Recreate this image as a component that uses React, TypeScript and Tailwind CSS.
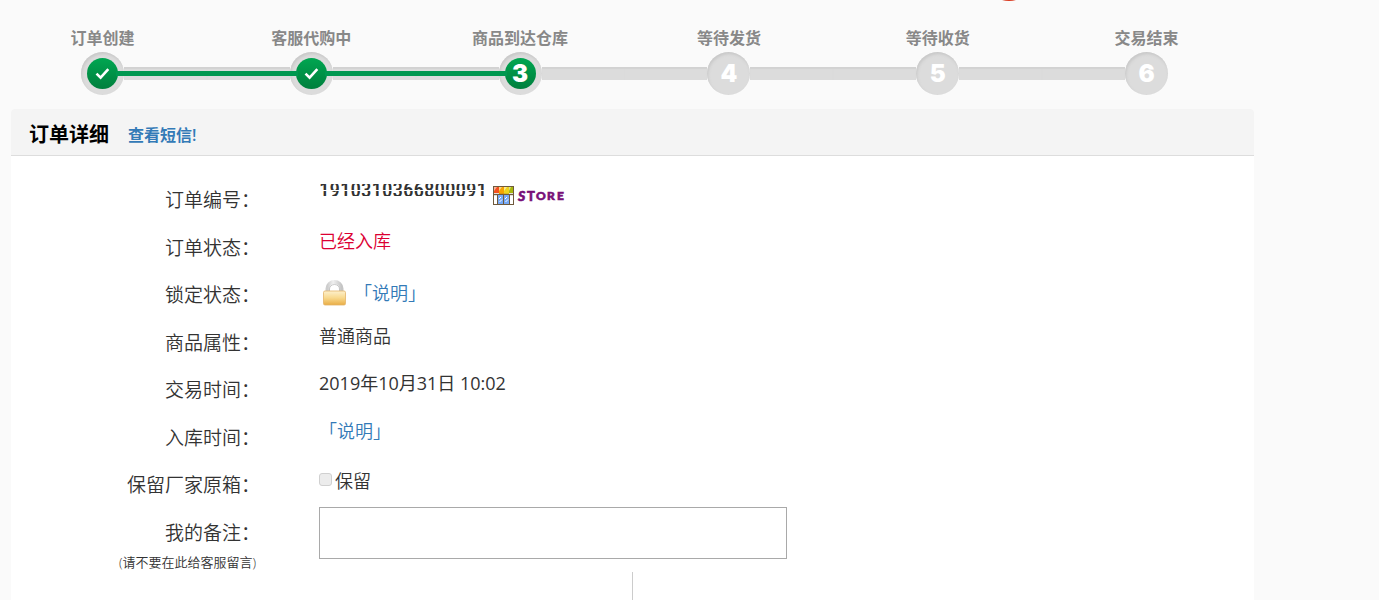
import * as React from "react"
import clsx from "clsx"

type StepState = "done" | "current" | "todo"

interface Step {
    label: string
    state: StepState
}

const steps: Step[] = [
    { label: "订单创建", state: "done" },
    { label: "客服代购中", state: "done" },
    { label: "商品到达仓库", state: "current" },
    { label: "等待发货", state: "todo" },
    { label: "等待收货", state: "todo" },
    { label: "交易结束", state: "todo" },
]

function Connector({ hidden, active }: { hidden: boolean; active: boolean }) {
    return (
        <div className={clsx("relative z-10 flex h-[13px] flex-1 items-center", !hidden && "bg-[#dcdcdc] shadow-[inset_0_2px_1px_#d2d2d2]")}>
            {!hidden && active && <div className="-mx-2 h-[5px] flex-1 bg-[#009850]" />}
        </div>
    )
}

function ProgressSteps() {
    return (
        <ol className="-ml-0.5 mr-32 grid grid-cols-6 pt-[26px]">
            {steps.map((step, i) => (
                <li key={step.label} className="text-center">
                    <div className="h-[26px] text-base leading-6 font-bold text-[#888]">{step.label}</div>
                    <div className="flex items-center">
                        <Connector hidden={i === 0} active={step.state !== "todo"} />
                        <div className="flex size-[43px] items-center justify-center rounded-full bg-[#dcdcdc] shadow-[inset_1px_2px_3px_#c8c8c8]">
                            <div className={clsx(
                                "flex size-[31px] items-center justify-center rounded-full font-['Inter'] text-2xl leading-none font-black text-white",
                                step.state !== "todo" && "bg-linear-to-b from-[#00a651] to-[#007f3d]"
                            )}>
                                {step.state === "done" ? (
                                    <svg className="size-[15px]" viewBox="0 0 15 15" fill="none" stroke="#fff" strokeWidth="2.6" aria-hidden="true">
                                        <path d="M1.5 7.6 5.6 11.6 13.3 3.2" />
                                    </svg>
                                ) : i + 1}
                            </div>
                        </div>
                        <Connector hidden={i === steps.length - 1} active={step.state === "done"} />
                    </div>
                </li>
            ))}
        </ol>
    )
}

function StoreLogo() {
    return (
        <svg className="h-5 w-[75px]" viewBox="0 0 75 20" aria-label="Store">
            <rect x="0.5" y="0.5" width="20" height="18" fill="#fff" stroke="#6f5a3c" />
            <rect x="1" y="1" width="5" height="6" fill="#f4511e" />
            <rect x="6" y="1" width="5" height="7" fill="#f5a300" />
            <rect x="11" y="1" width="5" height="7" fill="#eed31c" />
            <rect x="16" y="1" width="4" height="6" fill="#a9b80c" />
            <path d="M1 1h3l-3 4zM6 1h3l-3 4zM11 1h3l-3 4zM16 1h2l-2 4z" fill="#fff" opacity=".55" />
            <path d="M0 8.5h21" stroke="#6f5a3c" strokeWidth="1.4" />
            <rect x="5" y="9" width="5" height="9" fill="#76a9f7" />
            <rect x="11" y="9" width="5" height="9" fill="#76a9f7" />
            <path d="M4.5 9v10M10.5 9v10M16.5 9v10" stroke="#6f5a3c" />
            <path d="m6 13 2-2M6.500 16l2.500-2.500M12 13l2-2M12.500 16l2.500-2.500" stroke="#fff" />
            <g fill="#780f78" stroke="#780f78" strokeWidth=".6" fontFamily="Lato, sans-serif" fontWeight="900">
                <text x="25" y="15" fontSize="14" fontStyle="italic">S</text>
                <text x="34" y="15" fontSize="13">T</text>
                <text x="43" y="14" fontSize="12">O</text>
                <text x="54" y="14" fontSize="12">R</text>
                <text x="64" y="14" fontSize="12">E</text>
            </g>
        </svg>
    )
}

function LockIcon() {
    return (
        <svg className="h-[27px] w-[25px]" viewBox="0 0 25 27" aria-hidden="true">
            <defs>
                <linearGradient id="lock-body" x1="0" y1="0" x2="0" y2="1">
                    <stop offset="0" stopColor="#fdf0cd" />
                    <stop offset=".5" stopColor="#f8d88c" />
                    <stop offset="1" stopColor="#e9ad45" />
                </linearGradient>
                <linearGradient id="lock-shackle" x1="0" y1="0" x2="1" y2="0">
                    <stop offset="0" stopColor="#cdcdcd" />
                    <stop offset=".4" stopColor="#f0f0f0" />
                    <stop offset="1" stopColor="#c5c5c5" />
                </linearGradient>
            </defs>
            <path d="M5.500 12V8.500a7 6.500 0 0 1 14 0V12" fill="none" stroke="url(#lock-shackle)" strokeWidth="4" />
            <path d="M7.500 12V9a5 4.500 0 0 1 10 0V12" fill="none" stroke="#b5b5b5" strokeWidth=".7" />
            <rect x="1.500" y="11" width="22" height="14" rx="1.500" fill="url(#lock-body)" stroke="#e3b468" strokeWidth=".8" />
        </svg>
    )
}

// Only the upright strokes of the digits stay visible
function MaskedNumber() {
    return (
        <span className="relative mr-1.5 inline-block font-['Liberation_Sans_Narrow','Roboto_Condensed','Open_Sans'] text-[21px] leading-6 font-medium">
            1910310366800091
            <span className="absolute inset-0 flex flex-col justify-between py-1" aria-hidden="true">
                <span className="h-0.5 bg-white" />
                <span className="h-px bg-white" />
                <span className="h-0.5 bg-white" />
            </span>
        </span>
    )
}

function Row({ label, children }: { label: React.ReactNode; children: React.ReactNode }) {
    return (
        <div className="flex items-start gap-[59px]">
            <div className="-mb-0.5 w-[249px] shrink-0 text-right text-[19px] leading-[49px]">{label}</div>
            <div className="min-w-0 flex-1 text-lg leading-[34px]">{children}</div>
        </div>
    )
}

export default function App() {
    return (
        <div className="relative flex min-h-screen flex-col overflow-hidden bg-[#fafafa] font-['Open_Sans','Noto_Sans_CJK_SC',sans-serif] text-[#333]">
            <div className="absolute -top-[49px] left-[984px] size-[50px] rounded-full bg-[#d9381e]" />
            <ProgressSteps />

            <main className="mt-3.5 mr-[125px] ml-[11px] flex flex-1 flex-col rounded-t bg-white">
                <header className="flex items-center gap-[19px] rounded-t border-b border-[#ddd] bg-[#f4f4f4] px-[18px] pt-[11px] pb-[5px]">
                    <h1 className="text-xl leading-[30px] font-bold text-black">订单详细</h1>
                    <a href="#sms" className="text-base font-semibold text-[#337ab7]">查看短信!</a>
                </header>

                <form className="flex flex-1 flex-col pt-5 font-[350]">
                    <div className="grid min-h-[333px] auto-rows-fr">
                        <Row label="订单编号：">
                            <div className="flex items-start pt-0.5">
                                <MaskedNumber />
                                <a href="#store" className="pt-2"><StoreLogo /></a>
                            </div>
                        </Row>
                        <Row label="订单状态：">
                            <span className="text-[#dc0032]">已经入库</span>
                        </Row>
                        <Row label="锁定状态：">
                            <div className="flex h-11 items-center gap-[7px] pl-[3px]">
                                <LockIcon />
                                <a href="#lock" className="text-[#337ab7]">「说明」</a>
                            </div>
                        </Row>
                        <Row label="商品属性：">普通商品</Row>
                        <Row label="交易时间：">
                            <time dateTime="2019-10-31T10:02" className="font-normal">2019年10月31日 10:02</time>
                        </Row>
                        <Row label="入库时间：">
                            <a href="#stock" className="text-[#337ab7]">「说明」</a>
                        </Row>
                        <Row label="保留厂家原箱：">
                            <label className="flex h-10 items-center gap-[3px]">
                                <input type="checkbox" className="mb-1 size-[13px] appearance-none rounded-[3px] border border-[#d0d0d0] bg-[#ececec]" />
                                保留
                            </label>
                        </Row>
                    </div>
                    <Row
                        label={
                            <label htmlFor="remark" className="block">
                                我的备注：
                                <span className="block pr-1 text-[13px] leading-2">(请不要在此给客服留言)</span>
                            </label>
                        }
                    >
                        <textarea id="remark" className="-mt-0.5 block h-[52px] w-[468px] max-w-full resize-none border border-[#a9a9a9] bg-white" />
                    </Row>
                    <div className="mt-2 w-1/2 flex-1 border-r border-[#ccc]" />
                </form>
            </main>
        </div>
    )
}
